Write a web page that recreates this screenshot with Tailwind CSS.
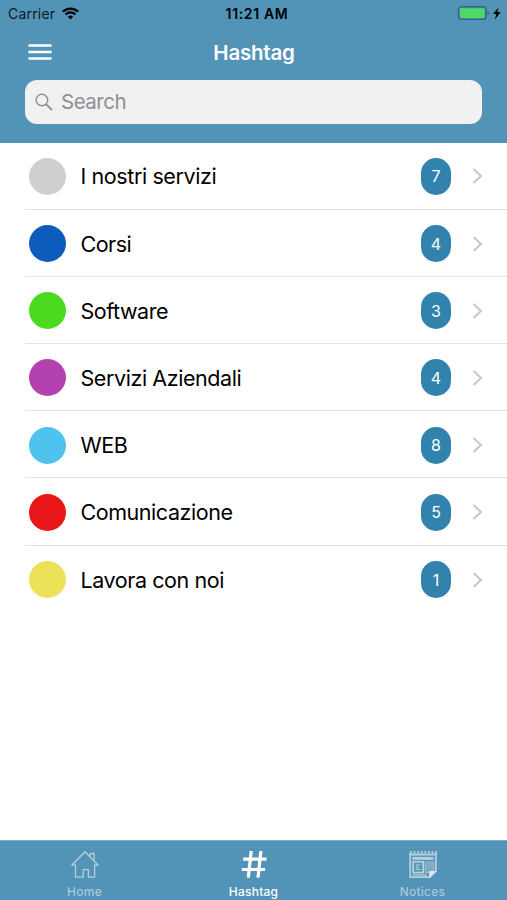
<!DOCTYPE html>
<html lang="it">
<head>
<meta charset="utf-8">
<title>Hashtag</title>
<script src="https://cdn.jsdelivr.net/npm/@tailwindcss/browser@4"></script>
</head>
<body class="bg-white">
<div class="w-[507px] h-[900px] flex flex-col overflow-hidden font-['Inter','Liberation_Sans',sans-serif] text-black">
  <header class="h-[142.5px] shrink-0 bg-[#5194b7] flex flex-col">
    <div class="h-[27px] grid grid-cols-3 items-center pl-[8px] pr-[5px]">
      <div class="flex items-center gap-[7px] text-[14px] leading-[27px] text-[#10181e]">
        <span class="tracking-[0.2px]">Carrier</span>
        <svg class="mt-[-1px]" width="17" height="13" viewBox="0 0 17 13" fill="none" stroke="#000" stroke-width="2.3"><path d="M.9 4.7a10.7 10.7 0 0 1 15.2 0M3.6 7.5a6.9 6.9 0 0 1 9.8 0"/><path d="M8.5 12.4 5.9 9.8a3.7 3.7 0 0 1 5.2 0z" fill="#000" stroke="none"/></svg>
      </div>
      <div class="text-center text-[14px] leading-[27px] font-semibold whitespace-nowrap pl-[4px] tracking-[0.65px]">11:21 AM</div>
      <svg class="justify-self-end mt-[-1px]" width="45" height="16" viewBox="0 0 45 16"><rect x="1.5" y="1.8" width="27.5" height="12.6" rx="2.8" fill="none" stroke="#346782" stroke-width="1.4"/><rect x="3" y="3.3" width="24.5" height="9.6" rx="1" fill="#4cd964"/><path d="M30.5 6v4.2c1.3-.5 1.8-1.2 1.8-2.1s-.5-1.6-1.8-2.1z" fill="#346782"/><path d="M41.8 2.2 36 9h3.4l-1.6 5.4 6-7.3h-3.6z" fill="#000"/></svg>
    </div>
    <div class="h-[53px] grid grid-cols-[60px_1fr_60px] items-center">
      <svg class="ml-[28px] mt-[-4px]" width="24" height="18" viewBox="0 0 24 18" stroke="#fff" stroke-width="2.5"><path d="M.5 2.5h23M.5 9h23M.5 15.5h23"/></svg>
      <h1 class="text-center text-[20.5px] leading-[26px] font-semibold text-white tracking-[-0.2px] mt-[-1px] pl-[1px]">Hashtag</h1>
    </div>
    <div class="mx-[25px] h-[44px] rounded-[12px] bg-[#f1f1f2] flex items-center pl-[10px] gap-[8px] text-[#8e8e93]">
      <svg width="18" height="18" viewBox="0 0 18 18" fill="none" stroke="#8e8e93" stroke-width="1.4"><circle cx="6.9" cy="7" r="5.8"/><path d="m11 11.2 6 5.8" stroke-width="1.8"/></svg>
      <span class="text-[20.5px] leading-[26px] tracking-[-0.5px]">Search</span>
    </div>
  </header>
  <main id="list" class="flex-1"></main>
  <nav class="h-[60px] shrink-0 bg-[#5194b7] border-t border-[#84aec2] grid grid-cols-3 text-[12px] leading-[15px] font-medium text-[#abc8d8]">
    <div class="flex flex-col items-center pt-[9px]">
      <svg width="30" height="29" viewBox="0 0 30 29" fill="none" stroke="#b7cfdb" stroke-width="1.3" stroke-linejoin="round"><path d="M1.8 15.2 15 1.8l13.2 13.4h-3.6v12h-6.2v-7.6h-5.2v7.6H5.5v-12z"/><path d="M20.2 6.6V3.5h3.9v7.1"/></svg>
      <span class="mt-[5px] tracking-[0.25px]">Home</span>
    </div>
    <div class="flex flex-col items-center pt-[9px] text-white">
      <svg width="30" height="29" viewBox="0 0 30 29" fill="none" stroke="#fff" stroke-width="3.2"><path d="M4.2 9.1h23.3M2.8 19.5h23.3M12.2 1 9.3 27.7M21.9 1 19 27.7"/></svg>
      <span class="mt-[5px] tracking-[0.25px]">Hashtag</span>
    </div>
    <div class="flex flex-col items-center pt-[9px]">
      <svg width="30" height="29" viewBox="0 0 30 29" fill="none" stroke="#b7cfdb"><path d="M2.2 3v24.2h19.7l6-6.1V3" stroke-width="1.8"/><path d="M1.4 4.5h27.2" stroke-width="2"/><path d="M2 2.2h27" stroke-width="2.6" stroke-dasharray="1.7 1.9"/><path d="M4.5 8.4h21" stroke-width="3"/><rect x="5.2" y="11.8" width="10" height="10.8" stroke-width="1.8"/><path d="M8 15h4.5M7.8 17.2h3M7.8 19.3h4.7" stroke-width="1.2"/><path d="M17.3 12h8.4v10.6h-8.4z" fill="#7eabc3" stroke="#a4c2d2" stroke-width="1"/><path d="M5 25h14" stroke-width="1.3"/><path d="M21.3 27.9v-6.8h7.2z" fill="#dde8ed" stroke="none"/></svg>
      <span class="mt-[5px] tracking-[0.25px]">Notices</span>
    </div>
  </nav>
</div>
<script>
const items = [
  ['I nostri servizi', 'bg-[#d1cfce]', 7, 'tracking-[-0.4px]'],
  ['Corsi', 'bg-[#0d5cbd]', 4, 'tracking-[-0.5px]'],
  ['Software', 'bg-[#4cda20]', 3, 'tracking-[-0.45px]'],
  ['Servizi Aziendali', 'bg-[#b442ae]', 4, 'tracking-[-0.42px]'],
  ['WEB', 'bg-[#4dc3ee]', 8, 'tracking-[-0.4px]'],
  ['Comunicazione', 'bg-[#e81618]', 5, 'tracking-[-0.45px]'],
  ['Lavora con noi', 'bg-[#ece25a]', 1, 'tracking-[-0.42px]'],
];
document.getElementById('list').innerHTML = items.map(([name, color, count, tracking], i) => `
  <div class="h-[67.2px] ml-[25px] flex items-center pt-[1.6px] pl-[4px] pr-[24px] ${i < items.length - 1 ? 'border-b border-[#e2e2e4]' : 'border-b border-transparent'}">
    <span class="size-[37px] rounded-full shrink-0 ${color}"></span>
    <span class="ml-[14.5px] flex-1 text-[21.5px] leading-[28px] ${tracking}">${name}</span>
    <span class="w-[30px] h-[37px] rounded-[15px] bg-[#3182ad] text-white text-[16px] flex items-center justify-center">${count}</span>
    <svg class="ml-[21px]" width="11" height="18" viewBox="0 0 11 18" fill="none" stroke="#c7c7cc" stroke-width="2"><path d="m1.5 2 7.5 7-7.5 7"/></svg>
  </div>`).join('');
</script>
</body>
</html>
